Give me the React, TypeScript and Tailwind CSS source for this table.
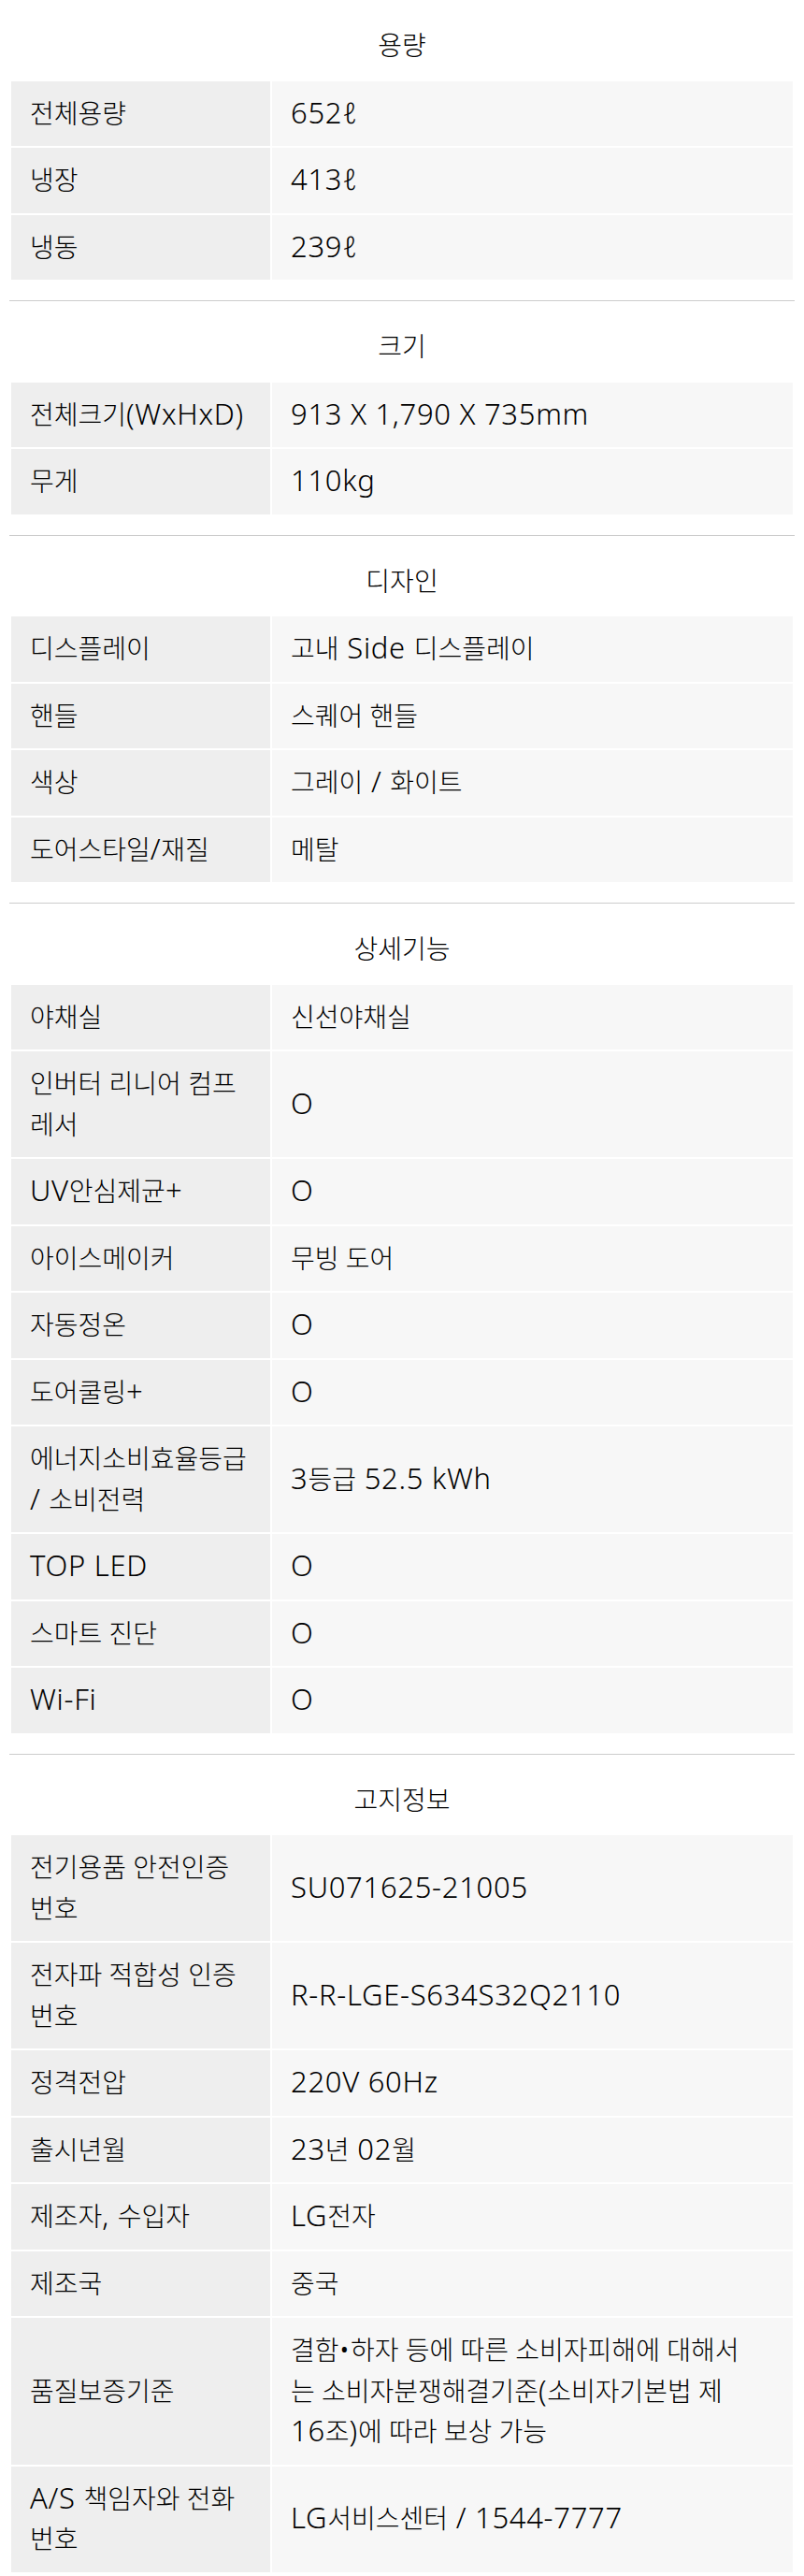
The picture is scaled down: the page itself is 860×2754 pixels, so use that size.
import React from "react";

type Cell = string | string[];
type Row = [Cell, Cell];
type Section = { title: string; rows: Row[] };

const sections: Section[] = [
  {
    title: "용량",
    rows: [
      ["전체용량", "652ℓ"],
      ["냉장", "413ℓ"],
      ["냉동", "239ℓ"],
    ],
  },
  {
    title: "크기",
    rows: [
      ["전체크기(WxHxD)", "913 X 1,790 X 735mm"],
      ["무게", "110kg"],
    ],
  },
  {
    title: "디자인",
    rows: [
      ["디스플레이", "고내 Side 디스플레이"],
      ["핸들", "스퀘어 핸들"],
      ["색상", "그레이 / 화이트"],
      ["도어스타일/재질", "메탈"],
    ],
  },
  {
    title: "상세기능",
    rows: [
      ["야채실", "신선야채실"],
      [["인버터 리니어 컴프", "레서"], "O"],
      ["UV안심제균+", "O"],
      ["아이스메이커", "무빙 도어"],
      ["자동정온", "O"],
      ["도어쿨링+", "O"],
      [["에너지소비효율등급", "/ 소비전력"], "3등급 52.5 kWh"],
      ["TOP LED", "O"],
      ["스마트 진단", "O"],
      ["Wi-Fi", "O"],
    ],
  },
  {
    title: "고지정보",
    rows: [
      [["전기용품 안전인증", "번호"], "SU071625-21005"],
      [["전자파 적합성 인증", "번호"], "R-R-LGE-S634S32Q2110"],
      ["정격전압", "220V 60Hz"],
      ["출시년월", "23년 02월"],
      ["제조자, 수입자", "LG전자"],
      ["제조국", "중국"],
      [
        "품질보증기준",
        [
          "결함•하자 등에 따른 소비자피해에 대해서",
          "는 소비자분쟁해결기준(소비자기본법 제",
          "16조)에 따라 보상 가능",
        ],
      ],
      [["A/S 책임자와 전화", "번호"], "LG서비스센터 / 1544-7777"],
    ],
  },
];

const HANGUL = /([\uAC00-\uD7A3\u3131-\u318E]+)/;

function Text({ text }: { text: string }) {
  const parts = text.split(HANGUL).filter((p) => p.length > 0);
  return (
    <>
      {parts.map((p, i) =>
        HANGUL.test(p) || p.trim() === "" ? (
          <React.Fragment key={i}>{p}</React.Fragment>
        ) : (
          <span key={i} className="text-[31px] leading-[30px] font-light tracking-[0.7px]">
            {p}
          </span>
        )
      )}
    </>
  );
}

function Lines({ value }: { value: Cell }) {
  if (typeof value === "string")
    return (
      <span className="whitespace-nowrap">
        <Text text={value} />
      </span>
    );
  return (
    <span className="flex flex-col">
      {value.map((l, i) => (
        <span key={i} className="whitespace-nowrap">
          <Text text={l} />
        </span>
      ))}
    </span>
  );
}

export default function App() {
  return (
    <div
      className="min-h-screen bg-white px-[10px] text-[28px] leading-[43.5px] font-light text-black"
      style={{ fontFamily: '"Noto Sans", "Noto Sans CJK KR", sans-serif' }}
    >
      {sections.map((s, i) => (
        <section key={s.title} className={i > 0 ? "border-t border-[#cccccc] pb-[20px]" : "pb-[20px]"}>
          <h2 className="pt-[27px] text-center font-light">{s.title}</h2>
          <div className="mt-[14px] grid grid-cols-[277px_1fr] gap-[2px] p-[2px]">
            {s.rows.map((r, j) => (
              <React.Fragment key={j}>
                <div className="flex items-center bg-[#eeeeee] px-[20px] py-[13px]">
                  <Lines value={r[0]} />
                </div>
                <div className="flex items-center bg-[#f7f7f7] px-[20px] py-[13px]">
                  <Lines value={r[1]} />
                </div>
              </React.Fragment>
            ))}
          </div>
        </section>
      ))}
    </div>
  );
}
